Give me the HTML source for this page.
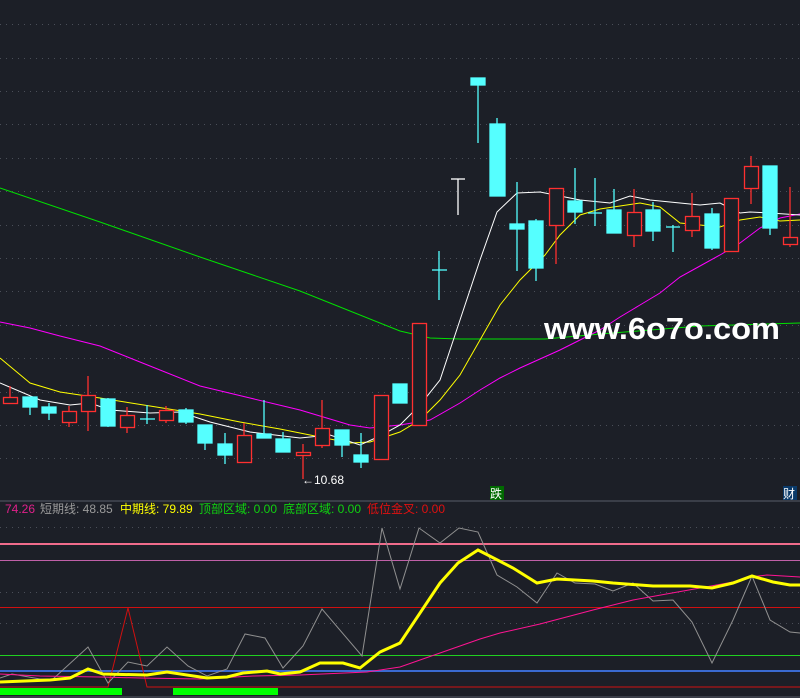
<!DOCTYPE html>
<html><head><meta charset="utf-8"><style>
html,body{margin:0;padding:0;background:#1c1f27;}
body{width:800px;height:698px;overflow:hidden;position:relative;font-family:"Liberation Sans","Noto Sans CJK SC",sans-serif;}
svg{position:absolute;left:0;top:0}
.hd{position:absolute;top:502px;font-size:12px;line-height:14px;white-space:nowrap}
</style></head><body>
<svg width="800" height="698" viewBox="0 0 800 698">
<g stroke="#4a4e58" stroke-width="1" stroke-dasharray="1,5">
<line x1="0" y1="24.5" x2="800" y2="24.5"/><line x1="0" y1="58.5" x2="800" y2="58.5"/><line x1="0" y1="91.5" x2="800" y2="91.5"/><line x1="0" y1="124.5" x2="800" y2="124.5"/><line x1="0" y1="158.5" x2="800" y2="158.5"/><line x1="0" y1="191.5" x2="800" y2="191.5"/><line x1="0" y1="225.5" x2="800" y2="225.5"/><line x1="0" y1="258.5" x2="800" y2="258.5"/><line x1="0" y1="291.5" x2="800" y2="291.5"/><line x1="0" y1="325.5" x2="800" y2="325.5"/><line x1="0" y1="358.5" x2="800" y2="358.5"/><line x1="0" y1="392.5" x2="800" y2="392.5"/><line x1="0" y1="425.5" x2="800" y2="425.5"/><line x1="0" y1="458.5" x2="800" y2="458.5"/>
<line x1="0" y1="527.5" x2="800" y2="527.5"/><line x1="0" y1="592.5" x2="800" y2="592.5"/><line x1="0" y1="623.5" x2="800" y2="623.5"/>
</g>
<line x1="0" y1="501" x2="800" y2="501" stroke="#3a3e48" stroke-width="2"/>
<line x1="0" y1="697" x2="800" y2="697" stroke="#3a3e48" stroke-width="2"/>
<polyline fill="none" stroke="#00e000" stroke-width="1" points="0,188 100,222 200,257 300,291 400,331 430,338 460,339 545,339 600,334 700,326 800,323"/>
<polyline fill="none" stroke="#ff00ff" stroke-width="1" points="0,322 30,328 60,336 100,346 150,366 200,386 250,398 300,410 350,425 370,428 400,425 430,420 460,403 480,390 500,378 520,368 540,359 560,350 580,340 600,330 620,317 640,305 660,293 680,277 700,266 720,255 740,243 760,228 780,218 800,214"/>
<polyline fill="none" stroke="#ffff00" stroke-width="1" points="0,358 30,383 60,392 100,398 150,406 200,414 240,422 280,429 320,437 350,443 370,442 400,432 420,420 440,400 460,375 480,340 500,305 520,280 545,255 560,235 580,215 600,209 620,206 640,203 660,207 680,223 700,225 720,227 740,220 760,217 780,221 800,220"/>
<polyline fill="none" stroke="#ffffff" stroke-width="1" points="0,383 40,400 70,405 90,403 110,410 150,413 180,412 210,422 250,432 300,438 330,435 360,445 380,436 400,425 420,405 440,380 460,320 480,260 497,212 517,193 540,192 560,196 580,200 610,203 630,196 650,200 670,202 700,205 720,203 740,213 750,212 770,213 800,215"/>
<g stroke-width="1.3">
<g stroke="#ff3030" fill="#1c1f27">
<line x1="10" y1="386" x2="10" y2="397"/><rect x="3.5" y="397.5" width="14" height="6"/>
<line x1="69" y1="406" x2="69" y2="427"/><rect x="62.5" y="411.5" width="14" height="11"/>
<line x1="88" y1="376" x2="88" y2="431"/><rect x="81.5" y="395.5" width="14" height="16"/>
<line x1="127" y1="407" x2="127" y2="433"/><rect x="120.5" y="415.5" width="14" height="12"/>
<line x1="166" y1="406" x2="166" y2="423"/><rect x="159.5" y="410.5" width="14" height="10"/>
<line x1="244" y1="423" x2="244" y2="435"/><rect x="237.5" y="435.5" width="14" height="27"/>
<line x1="303" y1="444" x2="303" y2="479"/><rect x="296.5" y="452.5" width="14" height="3"/>
<line x1="322" y1="400" x2="322" y2="448"/><rect x="315.5" y="428.5" width="14" height="17"/>
<rect x="374.5" y="395.5" width="14" height="64"/>
<rect x="412.5" y="323.5" width="14" height="102"/>
<line x1="556" y1="225" x2="556" y2="264"/><rect x="549.5" y="188.5" width="14" height="37"/>
<line x1="634" y1="189" x2="634" y2="247"/><rect x="627.5" y="212.5" width="14" height="23"/>
<line x1="692" y1="193" x2="692" y2="237"/><rect x="685.5" y="216.5" width="14" height="14"/>
<rect x="724.5" y="198.5" width="14" height="53"/>
<line x1="751" y1="156" x2="751" y2="204"/><rect x="744.5" y="166.5" width="14" height="22"/>
<line x1="790" y1="187" x2="790" y2="247"/><rect x="783.5" y="237.5" width="14" height="7"/>
</g>
<g stroke="#55ffff" fill="#55ffff">
<line x1="30" y1="397" x2="30" y2="415"/><rect x="23" y="397" width="14" height="10"/>
<line x1="49" y1="403" x2="49" y2="420"/><rect x="42" y="407" width="14" height="6"/>
<line x1="108" y1="398" x2="108" y2="427"/><rect x="101" y="399" width="14" height="27"/>
<line x1="147" y1="405" x2="147" y2="424"/><line x1="140" y1="419" x2="155" y2="419"/>
<line x1="186" y1="408" x2="186" y2="424"/><rect x="179" y="410" width="14" height="12"/>
<line x1="205" y1="425" x2="205" y2="450"/><rect x="198" y="425" width="14" height="18"/>
<line x1="225" y1="433" x2="225" y2="464"/><rect x="218" y="444" width="14" height="11"/>
<line x1="264" y1="400" x2="264" y2="438"/><rect x="257" y="434" width="14" height="4"/>
<line x1="283" y1="432" x2="283" y2="452"/><rect x="276" y="439" width="14" height="13"/>
<line x1="342" y1="430" x2="342" y2="457"/><rect x="335" y="430" width="14" height="15"/>
<line x1="361" y1="433" x2="361" y2="468"/><rect x="354" y="455" width="14" height="7"/>
<rect x="393" y="384" width="14" height="19"/>
<line x1="439" y1="251" x2="439" y2="300"/><line x1="432" y1="270" x2="447" y2="270"/>
<line x1="478" y1="85" x2="478" y2="143"/><rect x="471" y="78" width="14" height="7"/>
<line x1="497" y1="118" x2="497" y2="124"/><rect x="490" y="124" width="15" height="72"/>
<line x1="517" y1="182" x2="517" y2="271"/><rect x="510" y="224" width="14" height="5"/>
<line x1="536" y1="219" x2="536" y2="281"/><rect x="529" y="221" width="14" height="47"/>
<line x1="575" y1="168" x2="575" y2="224"/><rect x="568" y="201" width="14" height="11"/>
<line x1="595" y1="178" x2="595" y2="226"/><line x1="588" y1="213" x2="602" y2="213"/>
<line x1="614" y1="189" x2="614" y2="233"/><rect x="607" y="210" width="14" height="23"/>
<line x1="653" y1="202" x2="653" y2="241"/><rect x="646" y="210" width="14" height="21"/>
<line x1="673" y1="225" x2="673" y2="252"/><line x1="666" y1="227" x2="680" y2="227"/>
<line x1="712" y1="208" x2="712" y2="250"/><rect x="705" y="214" width="14" height="34"/>
<line x1="770" y1="166" x2="770" y2="235"/><rect x="763" y="166" width="14" height="62"/>
</g>
<g stroke="#ffffff"><line x1="458" y1="179" x2="458" y2="215"/><line x1="451" y1="179" x2="465" y2="179"/></g>
</g>
<text x="302" y="484" fill="#ffffff" font-size="12" font-family="Liberation Sans,sans-serif">←10.68</text>
<text x="544" y="339" fill="#ffffff" font-size="31" font-weight="bold" font-family="Liberation Sans,sans-serif" textLength="236" lengthAdjust="spacingAndGlyphs">www.6o7o.com</text>
<rect x="490" y="486" width="14" height="14" fill="#006a00"/>
<text x="490" y="498" fill="#ffffff" font-size="12" font-family="Noto Sans CJK SC,sans-serif">跌</text>
<rect x="783" y="486" width="14" height="14" fill="#0a3a6a"/>
<text x="783" y="498" fill="#ffffff" font-size="12" font-family="Noto Sans CJK SC,sans-serif">财</text>
<line x1="0" y1="544" x2="800" y2="544" stroke="#f06c8c" stroke-width="2"/>
<line x1="0" y1="560.5" x2="800" y2="560.5" stroke="#c060a8" stroke-width="1"/>
<line x1="0" y1="607.5" x2="800" y2="607.5" stroke="#d01010" stroke-width="1"/>
<line x1="0" y1="655.5" x2="800" y2="655.5" stroke="#20d020" stroke-width="1"/>
<line x1="0" y1="671" x2="800" y2="671" stroke="#3a6ad0" stroke-width="2"/>
<polyline fill="none" stroke="#d01010" stroke-width="1" points="0,687 108,687 128,608 147,687 800,687"/>
<rect x="0" y="688" width="122" height="7" fill="#00ff00"/>
<rect x="173" y="688" width="105" height="7" fill="#00ff00"/>
<polyline fill="none" stroke="#909090" stroke-width="1" points="0,678 12,674 40,679 53,679 88,647 108,683 128,662 147,666 167,647 188,666 207,676 227,669 245,634 265,638 283,668 303,646 322,609 362,656 382,528 400,589 419,528 440,543 459,528 478,532 497,575 517,587 537,603 557,573 575,583 595,584 613,591 633,583 653,601 673,600 692,622 712,663 733,620 752,576 770,620 790,632 800,633"/>
<polyline fill="none" stroke="#ff1493" stroke-width="1" points="0,674 40,676 100,677 140,678 200,679 253,676 300,675 367,672 400,667 440,653 480,639 500,633 540,624 593,610 633,600 700,588 733,582 750,577 767,575 800,577"/>
<polyline fill="none" stroke="#ffff00" stroke-width="3" points="0,682 50,680 70,678 88,669 103,674 147,675 167,672 207,678 227,677 243,673 267,671 280,674 300,672 320,663 343,663 360,668 380,652 400,643 440,583 458,563 478,550 513,568 537,583 557,579 593,581 613,583 653,586 690,586 712,588 733,583 752,576 773,582 790,585 800,585"/>
</svg>
<div class="hd" style="left:5px;color:#e0208a">74.26</div>
<div class="hd" style="left:40px;color:#9a9a9a">短期线: 48.85</div>
<div class="hd" style="left:120px;color:#ffff00">中期线: 79.89</div>
<div class="hd" style="left:199px;color:#10d010">顶部区域: 0.00</div>
<div class="hd" style="left:283px;color:#10d010">底部区域: 0.00</div>
<div class="hd" style="left:367px;color:#e01010">低位金叉: 0.00</div>
</body></html>
